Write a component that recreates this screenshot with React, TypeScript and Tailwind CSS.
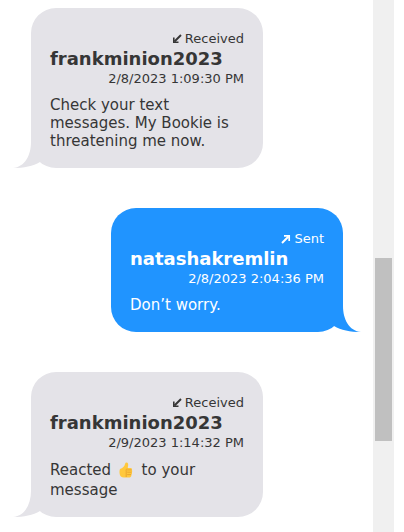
import type { ReactNode } from 'react';

type Message = {
  direction: 'received' | 'sent';
  name: string;
  date: string;
  body: ReactNode;
};

function ThumbsUp() {
  return (
    <svg role="img" aria-label="thumbs up" viewBox="0 0 14 16" className="mr-1 ml-[3px] inline-block h-4 w-[14px] align-[-3px]">
      <path d="M1 7C2.6 6.3 4.6 5.4 5.4 3.8C6 2.6 6 .4 7.5.4C9.2.4 9.4 2.3 9.1 3.8L8.6 6H11.6C13 6 13.3 7.4 12.6 7.9C13.5 8.5 13.4 9.8 12.7 10.2C13.3 10.9 13.1 12.1 12.3 12.5C12.7 13.4 12.2 15.4 10.8 15.4H5C2.4 15.4.8 13.8.6 11.4C.4 9.8.5 8.2 1 7Z" fill="#ffc83d" />
      <path d="M12.6 7.9H8.2M12.6 10.2H8.2M12.2 12.6H8.2M8.4 6.3C7.2 7 7 8 7.2 8.8V15" fill="none" stroke="#e8a22c" strokeWidth="0.9" />
    </svg>
  );
}

function Arrow({ sent }: { sent: boolean }) {
  return (
    <svg aria-hidden="true" viewBox="0 0 10 10" className="h-[10px] w-[10px]" fill="none" stroke="currentColor">
      {sent ? (
        <>
          <path d="M1 9L7.5 2.5" strokeWidth="2" />
          <path d="M3 1.8H8.2V7" strokeWidth="1.7" />
        </>
      ) : (
        <>
          <path d="M9 1L2.5 7.5" strokeWidth="1.9" />
          <path d="M1.8 3.5V8.2H6.5" strokeWidth="1.6" />
        </>
      )}
    </svg>
  );
}

const messages: Message[] = [
  {
    direction: 'received',
    name: 'frankminion2023',
    date: '2/8/2023 1:09:30 PM',
    body: 'Check your text messages. My Bookie is threatening me now.',
  },
  { direction: 'sent', name: 'natashakremlin', date: '2/8/2023 2:04:36 PM', body: 'Don’t worry.' },
  {
    direction: 'received',
    name: 'frankminion2023',
    date: '2/9/2023 1:14:32 PM',
    body: (
      <>
        <span className="inline-block leading-[21px]">
          Reacted <ThumbsUp /> to your
        </span>{' '}
        message
      </>
    ),
  },
];

function Bubble({ message }: { message: Message }) {
  const sent = message.direction === 'sent';
  return (
    <article
      className={
        'relative w-[232px] rounded-[25px] px-[19px] pt-[23px] pb-[18px] ' +
        (sent ? 'self-end bg-[#2094ff] text-white' : 'self-start bg-[#e4e3e8] text-[#363636]')
      }
    >
      <svg
        aria-hidden="true"
        viewBox="0 0 27 26"
        className={
          'absolute bottom-0 h-[26px] w-[27px] ' +
          (sent ? '-right-[18px] -scale-x-100 text-[#2094ff]' : '-left-[18px] text-[#e4e3e8]')
        }
      >
        <path d="M18 0C18 13 12 25 0 26C11 26 20 24 27 20V0Z" fill="currentColor" />
      </svg>
      <header>
        <p className="flex items-center justify-end gap-[3px] text-[13px] leading-[16px]">
          <Arrow sent={sent} />
          {sent ? 'Sent' : 'Received'}
        </p>
        <h2 className="text-[18px] leading-[24px] font-bold">{message.name}</h2>
        <p className="text-right text-[13px] leading-[16px]">
          <time>{message.date}</time>
        </p>
      </header>
      <p className="mt-[9px] text-[15px] leading-[18px]">{message.body}</p>
    </article>
  );
}

export default function App() {
  return (
    <div className="flex h-screen overflow-hidden bg-white pr-[10px] font-['Verdana','DejaVu_Sans',sans-serif]">
      <main className="flex min-w-0 flex-1 flex-col gap-10 pt-2 pr-[30px] pl-[31px]">
        {messages.map((message) => (
          <Bubble key={message.date} message={message} />
        ))}
      </main>
      <div className="w-[21px] shrink-0 bg-[#f0f0f0] px-[2px] pt-[258px]">
        <div className="h-[183px] bg-[#c0c0c0]" />
      </div>
    </div>
  );
}
